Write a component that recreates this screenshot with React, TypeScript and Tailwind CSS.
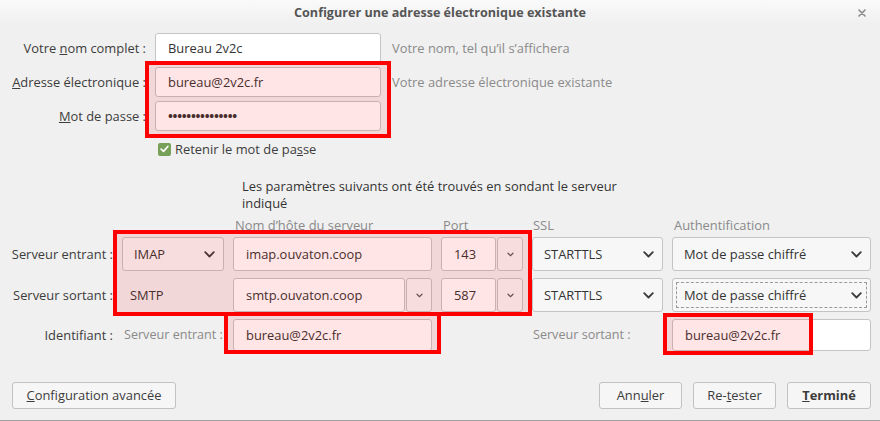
const Chevron = () => (
  <svg width="11" height="7" viewBox="0 0 11 7" className="shrink-0">
    <path d="M1.2 1.2l4.3 4.3 4.3-4.3" stroke="#3a3a3a" strokeWidth="1.8" fill="none" strokeLinecap="round" strokeLinejoin="round" />
  </svg>
);

const TinyChevron = () => (
  <svg width="7" height="5" viewBox="0 0 7 5">
    <path d="M1 1.2l2.5 2.4 2.5-2.4" stroke="#555" strokeWidth="1.2" fill="none" strokeLinecap="round" />
  </svg>
);

const Field = ({ value, className = "" }: { value: string; className?: string }) => (
  <div className={`flex items-center bg-white border border-[#c4c4c4] rounded-[3px] text-[#333] ${className}`}>
    {value}
  </div>
);

const Select = ({ value, focus = false }: { value: string; focus?: boolean }) => (
  <div className="h-full bg-[#f7f7f7] border border-[#c4c4c4] rounded-[3px] p-[3px]">
    <div
      className={`h-full flex items-center justify-between pl-[7px] pr-[4px] ${
        focus ? "border border-dashed border-[#9a9a9a]" : "border border-transparent"
      }`}
    >
      <span className="text-[#333]">{value}</span>
      <Chevron />
    </div>
  </div>
);

const SpinButton = () => (
  <div className="w-[26px] h-full bg-[#f7f7f7] border border-[#c4c4c4] rounded-[3px] flex items-center justify-center">
    <TinyChevron />
  </div>
);

const Btn = ({ children, bold = false, w }: { children: React.ReactNode; bold?: boolean; w: string }) => (
  <button
    className={`${w} h-[27px] bg-[#f6f6f6] border border-[#c2c2c2] rounded-[3px] text-[#3c3c3c] ${bold ? "font-bold" : ""}`}
  >
    {children}
  </button>
);

export default function App() {
  return (
    <div className="relative w-[880px] h-[421px] overflow-hidden bg-[#f0f0f0] flex flex-col font-['Open_Sans',sans-serif] text-[12.9px] text-[#3c3c3c] leading-none whitespace-nowrap">
      {/* title bar */}
      <div className="h-[26px] flex items-center bg-gradient-to-b from-[#fafafa] to-[#efefef]">
        <div className="w-[36px]" />
        <div className="flex-1 text-center font-bold text-[12.6px] text-[#555]">Configurer une adresse électronique existante</div>
        <div className="w-[36px] flex items-center justify-center">
          <svg width="8" height="8" viewBox="0 0 8 8">
            <path d="M1 1l6 6M7 1L1 7" stroke="#8a8a8a" strokeWidth="1.6" strokeLinecap="round" />
          </svg>
        </div>
      </div>

      {/* account */}
      <div className="mt-[7px] flex flex-col gap-[4px]">
        <div className="h-[30px] grid grid-cols-[146px_226px_auto] gap-x-[9px] items-center">
          <span className="text-right">
            Votre <u>n</u>om complet :
          </span>
          <Field value="Bureau 2v2c" className="h-[30px] pl-[12px]" />
          <span className="pl-[2px] text-[#8a8a8a]">Votre nom, tel qu’il s’affichera</span>
        </div>
        <div className="h-[30px] grid grid-cols-[146px_226px_auto] gap-x-[9px] items-center">
          <span className="text-right">
            <u>A</u>dresse électronique :
          </span>
          <Field value="bureau@2v2c.fr" className="h-[30px] pl-[12px]" />
          <span className="pl-[2px] text-[#8a8a8a]">Votre adresse électronique existante</span>
        </div>
        <div className="h-[30px] grid grid-cols-[146px_226px_auto] gap-x-[9px] items-center">
          <span className="text-right">
            <u>M</u>ot de passe :
          </span>
          <Field value="•••••••••••••••" className="h-[30px] pl-[12px] text-[13px] font-bold tracking-[-0.3px] text-[#333]" />
        </div>
      </div>

      <div className="mt-[11px] h-[14px] pl-[158px] flex items-center gap-[4px]">
        <div className="w-[13px] h-[13px] rounded-[2px] bg-[#77a158] flex items-center justify-center">
          <svg width="9" height="8" viewBox="0 0 9 8">
            <path d="M1.2 4.2l2.3 2.2L7.8 1.5" stroke="#fff" strokeWidth="1.7" fill="none" strokeLinecap="round" strokeLinejoin="round" />
          </svg>
        </div>
        <span>
          Retenir le mot de pa<u>s</u>se
        </span>
      </div>

      <p className="mt-[22px] pl-[242px] leading-[17px] text-[#333]">
        Les paramètres suivants ont été trouvés en sondant le serveur
        <br />
        indiqué
      </p>

      {/* server grid */}
      <div className="mt-[6px] h-[14px] grid grid-cols-[113px_102px_199px_82px_131px_199px] gap-x-[9px] items-center text-[#8a8a8a]">
        <span />
        <span />
        <span className="pl-[2px]">Nom d’hôte du serveur</span>
        <span className="pl-[2px]">Port</span>
        <span className="pl-[1px]">SSL</span>
        <span className="pl-[2px]">Authentification</span>
      </div>
      <div className="mt-[5px] grid grid-cols-[113px_102px_199px_82px_131px_199px] grid-rows-[34px_34px_32px] gap-x-[9px] gap-y-[7px]">
        <span className="self-center text-right">Serveur entrant :</span>
        <Select value="IMAP" />
        <Field value="imap.ouvaton.coop" className="h-full pl-[12px]" />
        <div className="flex gap-[1px] h-full">
          <Field value="143" className="w-[55px] h-full pl-[12px]" />
          <SpinButton />
        </div>
        <Select value="STARTTLS" />
        <Select value="Mot de passe chiffré" />

        <span className="self-center text-right">Serveur sortant :</span>
        <span className="self-center pl-[8px] text-[#333]">SMTP</span>
        <div className="flex gap-[1px] h-full">
          <Field value="smtp.ouvaton.coop" className="flex-1 h-full pl-[12px]" />
          <SpinButton />
        </div>
        <div className="flex gap-[1px] h-full">
          <Field value="587" className="w-[55px] h-full pl-[12px]" />
          <SpinButton />
        </div>
        <Select value="STARTTLS" />
        <Select value="Mot de passe chiffré" focus />

        <span className="self-center text-right">Identifiant :</span>
        <span className="self-center pl-[2px] text-[12.6px] text-[#8a8a8a]">Serveur entrant :</span>
        <Field value="bureau@2v2c.fr" className="h-full pl-[12px]" />
        <span />
        <span className="self-center pl-[1px] text-[12.6px] text-[#8a8a8a]">Serveur sortant :</span>
        <Field value="bureau@2v2c.fr" className="h-full pl-[12px]" />
      </div>

      {/* footer */}
      <div className="mt-auto pb-[11px] px-[12px] pr-[9px] flex items-end justify-between border-b border-[#a0a0a0]">
        <Btn w="w-[164px]">
          <u>C</u>onfiguration avancée
        </Btn>
        <div className="flex gap-[11px]">
          <Btn w="w-[83px]">
            Ann<u>u</u>ler
          </Btn>
          <Btn w="w-[83px]">
            Re-<u>t</u>ester
          </Btn>
          <Btn w="w-[84px]" bold>
            <u>T</u>erminé
          </Btn>
        </div>
      </div>

      {/* annotation overlays */}
      <div className="pointer-events-none absolute left-[145px] top-[61px] w-[246px] h-[77px] border-4 border-[#ff0000] bg-[rgba(255,0,0,0.1)]" />
      <div className="pointer-events-none absolute left-[113px] top-[230px] w-[419px] h-[86px] border-4 border-[#ff0000] bg-[rgba(255,0,0,0.1)]" />
      <div className="pointer-events-none absolute left-[224px] top-[312px] w-[217px] h-[42px] border-4 border-[#ff0000] bg-[rgba(255,0,0,0.1)]" />
      <div className="pointer-events-none absolute left-[663px] top-[313px] w-[150px] h-[42px] border-4 border-[#ff0000] bg-[rgba(255,0,0,0.1)]" />
    </div>
  );
}
